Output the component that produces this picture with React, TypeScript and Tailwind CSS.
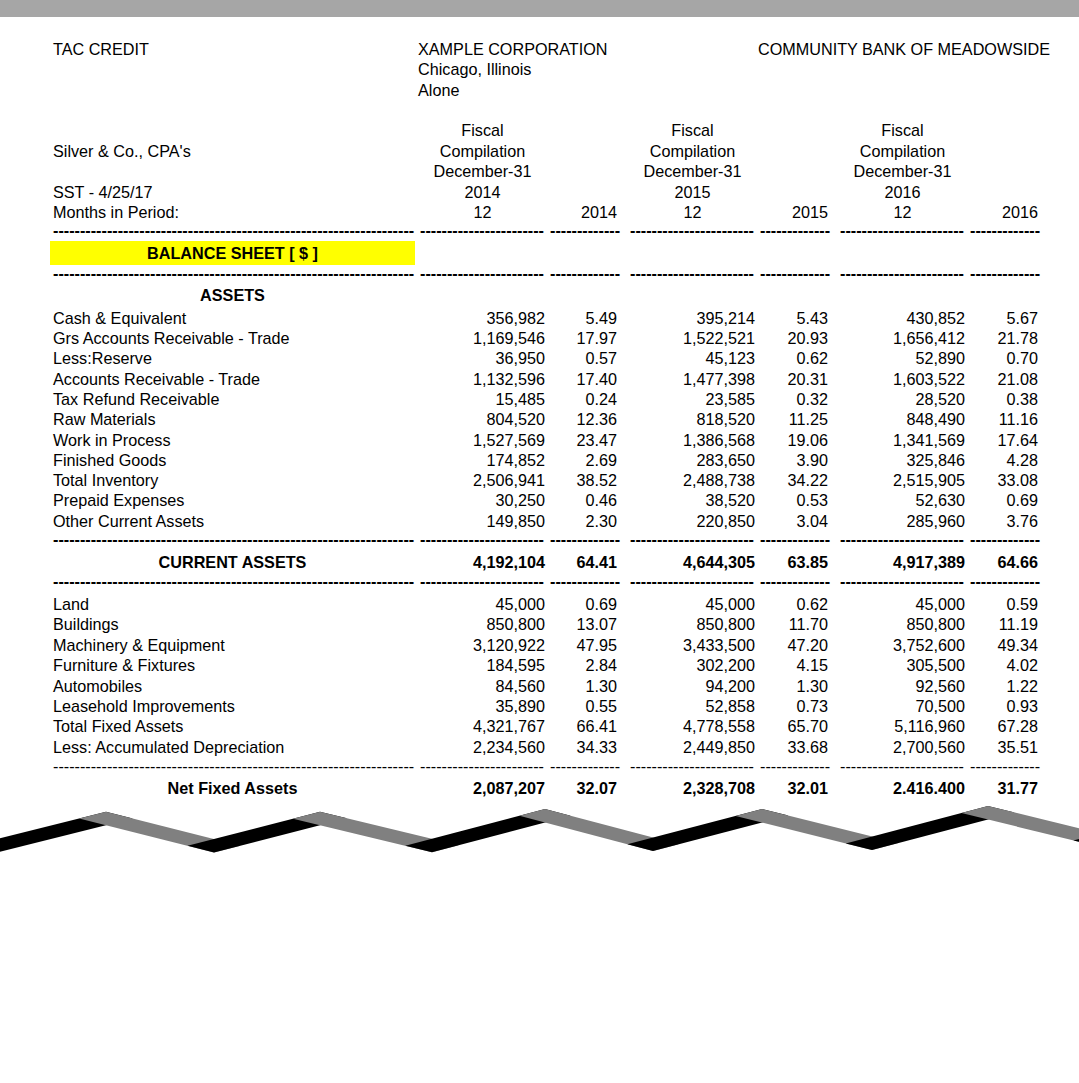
import { Fragment } from "react";

type Fig = [string, string];
type Pt = [number, number];
type Ln = { m: number; b: number };

const GRID =
  "grid grid-cols-[365px_125px_75px_125px_75px_125px_73px] gap-x-[5px] pl-[50px] items-center";
const PCT = ["pr-[8px]", "pr-[7px]", "pr-[5px]"];

const currentAssets: { label: string; cols: Fig[] }[] = [
  { label: "Cash & Equivalent", cols: [["356,982", "5.49"], ["395,214", "5.43"], ["430,852", "5.67"]] },
  { label: "Grs Accounts Receivable - Trade", cols: [["1,169,546", "17.97"], ["1,522,521", "20.93"], ["1,656,412", "21.78"]] },
  { label: "Less:Reserve", cols: [["36,950", "0.57"], ["45,123", "0.62"], ["52,890", "0.70"]] },
  { label: "Accounts Receivable - Trade", cols: [["1,132,596", "17.40"], ["1,477,398", "20.31"], ["1,603,522", "21.08"]] },
  { label: "Tax Refund Receivable", cols: [["15,485", "0.24"], ["23,585", "0.32"], ["28,520", "0.38"]] },
  { label: "Raw Materials", cols: [["804,520", "12.36"], ["818,520", "11.25"], ["848,490", "11.16"]] },
  { label: "Work in Process", cols: [["1,527,569", "23.47"], ["1,386,568", "19.06"], ["1,341,569", "17.64"]] },
  { label: "Finished Goods", cols: [["174,852", "2.69"], ["283,650", "3.90"], ["325,846", "4.28"]] },
  { label: "Total Inventory", cols: [["2,506,941", "38.52"], ["2,488,738", "34.22"], ["2,515,905", "33.08"]] },
  { label: "Prepaid Expenses", cols: [["30,250", "0.46"], ["38,520", "0.53"], ["52,630", "0.69"]] },
  { label: "Other Current Assets", cols: [["149,850", "2.30"], ["220,850", "3.04"], ["285,960", "3.76"]] },
];

const fixedAssets: { label: string; cols: Fig[] }[] = [
  { label: "Land", cols: [["45,000", "0.69"], ["45,000", "0.62"], ["45,000", "0.59"]] },
  { label: "Buildings", cols: [["850,800", "13.07"], ["850,800", "11.70"], ["850,800", "11.19"]] },
  { label: "Machinery & Equipment", cols: [["3,120,922", "47.95"], ["3,433,500", "47.20"], ["3,752,600", "49.34"]] },
  { label: "Furniture & Fixtures", cols: [["184,595", "2.84"], ["302,200", "4.15"], ["305,500", "4.02"]] },
  { label: "Automobiles", cols: [["84,560", "1.30"], ["94,200", "1.30"], ["92,560", "1.22"]] },
  { label: "Leasehold Improvements", cols: [["35,890", "0.55"], ["52,858", "0.73"], ["70,500", "0.93"]] },
  { label: "Total Fixed Assets", cols: [["4,321,767", "66.41"], ["4,778,558", "65.70"], ["5,116,960", "67.28"]] },
  { label: "Less: Accumulated Depreciation", cols: [["2,234,560", "34.33"], ["2,449,850", "33.68"], ["2,700,560", "35.51"]] },
];

const headerRows: [string, string[]][] = [
  ["", ["Fiscal", "", "Fiscal", "", "Fiscal", ""]],
  ["Silver & Co., CPA's", ["Compilation", "", "Compilation", "", "Compilation", ""]],
  ["", ["December-31", "", "December-31", "", "December-31", ""]],
  ["SST - 4/25/17", ["2014", "", "2015", "", "2016", ""]],
  ["Months in Period:", ["12", "2014", "12", "2015", "12", "2016"]],
];

function DataRow({
  label,
  cols,
  h,
  bold = false,
  center = false,
}: {
  label: string;
  cols: Fig[];
  h: string;
  bold?: boolean;
  center?: boolean;
}) {
  return (
    <div className={`${GRID} ${h} ${bold ? "font-bold" : ""}`}>
      <div className={center ? "text-center" : "pl-[3px]"}>{label}</div>
      {cols.map(([v, p], i) => (
        <Fragment key={i}>
          <div className="text-right">{v}</div>
          <div className={`text-right ${PCT[i]}`}>{p}</div>
        </Fragment>
      ))}
    </div>
  );
}

function Dashes({ h, light = false }: { h: string; light?: boolean }) {
  return (
    <div className={`${GRID} ${h} ${light ? "font-normal" : "font-bold"}`}>
      <div className="pl-[3px] overflow-hidden whitespace-nowrap">{"-".repeat(67)}</div>
      {[0, 1, 2].map((i) => (
        <Fragment key={i}>
          <div className="overflow-hidden whitespace-nowrap">{"-".repeat(23)}</div>
          <div className="overflow-hidden whitespace-nowrap">{"-".repeat(13)}</div>
        </Fragment>
      ))}
    </div>
  );
}

// folded ribbon under the table: black strips rise, gray strips fall
const line = (p: Pt, m: number): Ln => ({ m, b: p[1] - m * p[0] });
const cross = (a: Ln, c: Ln): Pt => {
  const x = (c.b - a.b) / (a.m - c.m);
  return [x, a.m * x + a.b];
};
const at = (l: Ln, x: number): Pt => [x, l.m * x + l.b];

function Ribbon() {
  const T = 13.5;
  const peaks: Pt[] = [[106, 811.7], [320, 811.7], [545, 809], [762, 809], [988, 806], [1210, 805]];
  const valleys: Pt[] = [[-5, 853], [214, 852.5], [432, 852.3], [653, 851], [872, 850], [1100, 847]];

  const bTop: Ln[] = [];
  const bBot: Ln[] = [];
  peaks.forEach((p, k) => {
    const v = valleys[k];
    const m = (p[1] + T - v[1]) / (p[0] - v[0]);
    bTop.push(line(p, m));
    bBot.push(line(v, m));
  });
  const gTop: Ln[] = [];
  const gBot: Ln[] = [];
  for (let k = 0; k < 5; k++) {
    const p = peaks[k];
    const v = valleys[k + 1];
    const m = (v[1] - (p[1] + T)) / (v[0] - p[0]);
    gTop.push(line(p, m));
    gBot.push(line(v, m));
  }

  const shapes: { pts: Pt[]; fill: string }[] = [];
  for (let k = 0; k < 6; k++) {
    const first: Pt[] =
      k === 0 ? [at(bBot[0], -20), at(bTop[0], -20)] : [valleys[k], cross(gBot[k - 1], bTop[k])];
    const last: Pt = k < 5 ? cross(gTop[k], bBot[k]) : at(bBot[k], peaks[k][0]);
    shapes.push({ pts: [...first, peaks[k], last], fill: "#000000" });
    if (k < 5) {
      shapes.push({
        pts: [peaks[k], cross(gTop[k], bBot[k + 1]), valleys[k + 1], cross(bTop[k], gBot[k])],
        fill: "#808080",
      });
    }
  }

  return (
    <svg width="1079" height="62" viewBox="0 798 1079 62" className="block mt-[1px]">
      {shapes.map((s, i) => (
        <polygon key={i} points={s.pts.map((p) => `${p[0]},${p[1]}`).join(" ")} fill={s.fill} />
      ))}
    </svg>
  );
}

export default function App() {
  return (
    <div className="min-h-screen w-[1079px] bg-white text-black text-[16.2px] font-['Liberation_Sans',Arial,sans-serif]">
      <div className="h-[17px] bg-[#a6a6a6]" />

      <div className="pt-[19.8px]">
        <div className={`${GRID} h-[20.4px]`}>
          <div className="pl-[3px]">TAC CREDIT</div>
          <div className="col-span-3 ml-[-2px]">XAMPLE CORPORATION</div>
          <div className="col-span-3 ml-[-2px] whitespace-nowrap">COMMUNITY BANK OF MEADOWSIDE</div>
        </div>
        <div className={`${GRID} h-[20.4px]`}>
          <div />
          <div className="col-span-3 ml-[-2px]">Chicago, Illinois</div>
        </div>
        <div className={`${GRID} h-[20.4px]`}>
          <div />
          <div className="col-span-3 ml-[-2px]">Alone</div>
        </div>
        <div className="h-[20.4px]" />

        {headerRows.map(([label, cells], r) => (
          <div key={r} className={`${GRID} h-[20.4px]`}>
            <div className="pl-[3px]">{label}</div>
            {cells.map((c, i) =>
              i % 2 === 0 ? (
                <div key={i} className="text-center">{c}</div>
              ) : (
                <div key={i} className={`text-right ${PCT[(i - 1) / 2]}`}>{c}</div>
              )
            )}
          </div>
        ))}

        <Dashes h="h-[20.5px]" />
        <div className={`${GRID} h-[22px] font-bold`}>
          <div className="h-full flex items-center justify-center bg-[#ffff00]">BALANCE SHEET [ $ ]</div>
        </div>
        <Dashes h="h-[20.5px]" />

        <div className={`${GRID} h-[22.5px] font-bold`}>
          <div className="text-center">ASSETS</div>
        </div>
        {currentAssets.map((r) => (
          <DataRow key={r.label} label={r.label} cols={r.cols} h="h-[20.3px]" />
        ))}

        <Dashes h="h-[21px]" />
        <DataRow
          label="CURRENT ASSETS"
          cols={[["4,192,104", "64.41"], ["4,644,305", "63.85"], ["4,917,389", "64.66"]]}
          h="h-[21px]"
          bold
          center
        />
        <Dashes h="h-[21px]" />

        {fixedAssets.map((r) => (
          <DataRow key={r.label} label={r.label} cols={r.cols} h="h-[20.4px]" />
        ))}

        <Dashes h="h-[21px]" light />
        <DataRow
          label="Net Fixed Assets"
          cols={[["2,087,207", "32.07"], ["2,328,708", "32.01"], ["2.416.400", "31.77"]]}
          h="h-[20.4px]"
          bold
          center
        />
      </div>

      <Ribbon />
    </div>
  );
}
